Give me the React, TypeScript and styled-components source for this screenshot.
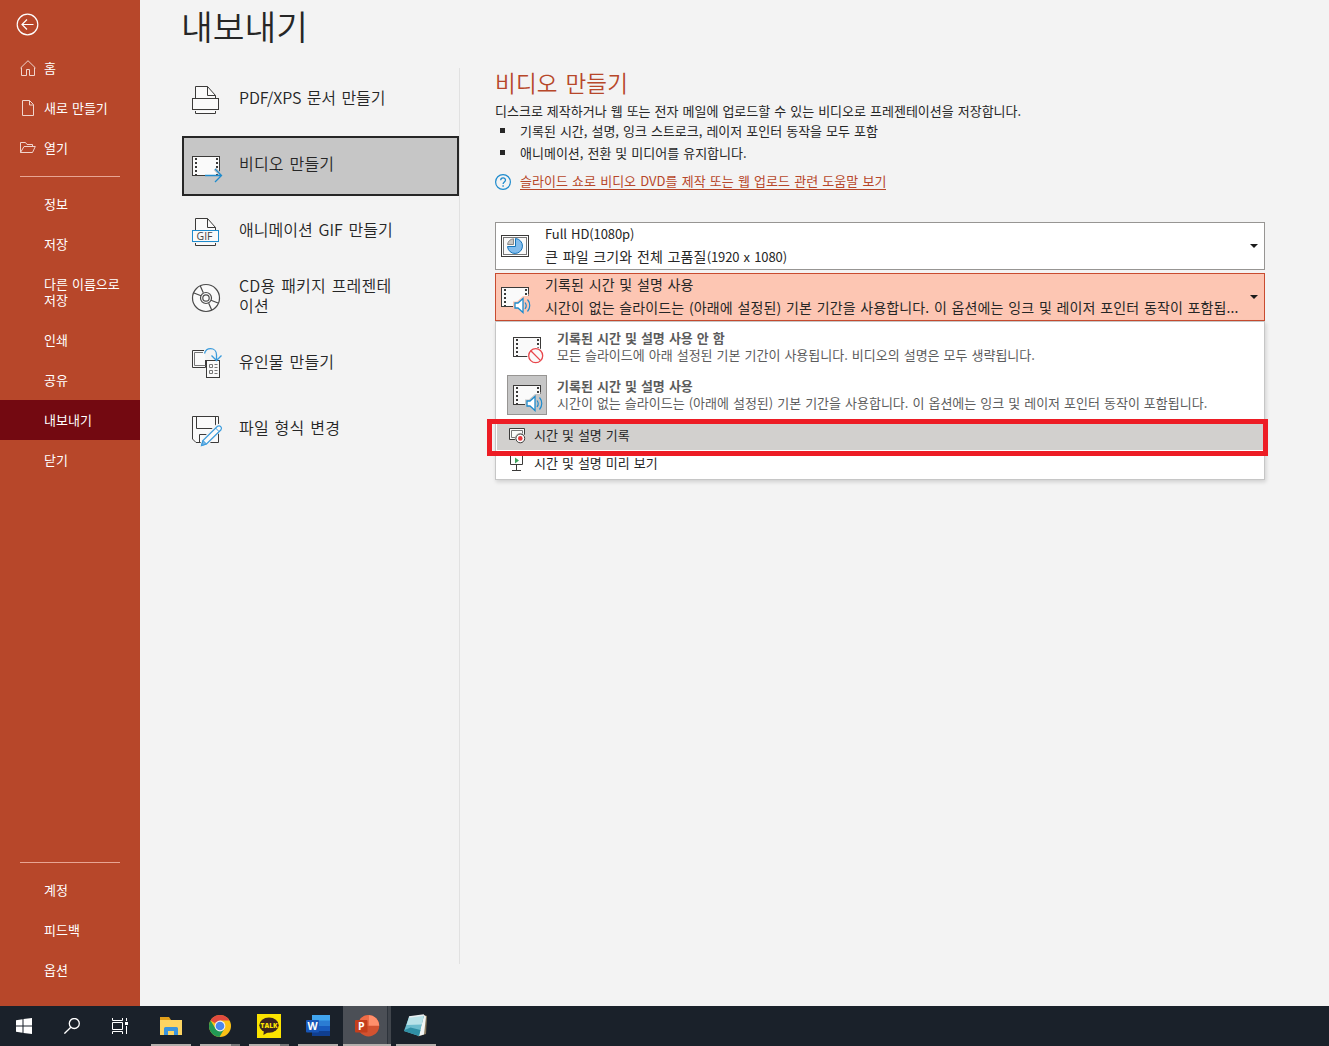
import { FC, ReactNode } from 'react'
import styled, { createGlobalStyle, css } from 'styled-components'

const ink = '#262626'
const line = '#3b3a39'
const blue = '#1e8bcd'
const paper = '#fafafa'

/* ---------- icons ---------- */

const Film = () => (
  <>
    <rect x="2.5" y="6.5" width="27" height="19" fill={paper} stroke={line} />
    <path d="M6 8v17M27 8v17" stroke={line} strokeWidth="2" strokeDasharray="2 2" />
  </>
)

const Page = () => (
  <>
    <path d="M5.5 14V2.5H17.5L25.5 11.5V14" fill={paper} stroke={line} />
    <path d="M17.5 2.5V11.5H25.5" fill="none" stroke={line} />
    <path d="M5.5 27V29.5H25.5V27" fill={paper} stroke={line} />
  </>
)

const PdfIcon = () => (
  <Svg32>
    <Page />
    <rect x="2.5" y="14.5" width="26" height="11" fill={paper} stroke={line} />
  </Svg32>
)

const VideoIcon = () => (
  <Svg32>
    <Film />
    <path d="M25 19l6.5 6.5L25 32" fill="none" stroke="#c6c6c6" strokeWidth="3.4" />
    <path d="M15 25.5H31M25 19l6.5 6.5L25 32" fill="none" stroke={blue} strokeWidth="1.3" />
  </Svg32>
)

const GifIcon = () => (
  <Svg32>
    <Page />
    <rect x="2.5" y="14.5" width="26" height="11" fill={paper} stroke={blue} />
    <IconText x="6.5" y="24">
      GIF
    </IconText>
  </Svg32>
)

const CdIcon = () => (
  <Svg32>
    <g fill={paper} stroke="#4a4a4a" strokeWidth="1.2">
      <circle cx="16" cy="16" r="13.5" />
      <circle cx="16" cy="16" r="5.5" />
      <circle cx="16" cy="16" r="3.2" />
      <path d="M10.3 4l3 6.8M4 11l7 2.8M21.7 28l-3-6.8M28 21l-7-2.8" />
    </g>
  </Svg32>
)

const HandoutIcon = () => (
  <Svg32>
    <path d="M14 2.5H2.5V19.5H15.5V12" fill={paper} stroke={line} />
    <path d="M13 4.5H4.5V17.5H15.5" fill="none" stroke="#777" />
    <rect x="16.5" y="12.5" width="13" height="17" fill={paper} stroke={line} />
    <path d="M19.5 16.5h3v3h-3zM19.5 22.5h3v3h-3z" fill="none" stroke="#777" />
    <path d="M24.5 16.5h3M24.5 19.5h3M24.5 22.5h3M24.5 25.5h3" stroke="#777" />
    <path
      d="M14.5 5.5C15.5 2 18 .7 20.5 .7c3.5 0 6 2.5 6 6V12M21.5 7.5l5 5 5-5"
      fill="none"
      stroke="#3a9bdc"
      strokeWidth="1.3"
    />
  </Svg32>
)

const SaveAsIcon = () => (
  <Svg32>
    <path d="M2.5 2.5H28.5V28.5H6L2.5 25z" fill={paper} stroke={line} />
    <path d="M6.5 2.5V14.5H25.5V2.5M9.5 28V20.5H22" fill="none" stroke={line} />
    <path d="M9 33L12 25 26 10.5 32 9 33 15 19 30z" fill="#f3f3f3" />
    <path
      d="M11.5 31.5l1.5-5L27.5 12.3c2.5-1.5 5 1 3.5 3.5L16.5 30z"
      fill={paper}
      stroke="#3a9bdc"
      strokeWidth="1.2"
    />
    <path d="M11.5 31.5l1.5-5 3.5 3.5z" fill="#75b5e5" stroke="#3a9bdc" />
    <path d="M25.5 14l3.5 3.5" stroke="#3a9bdc" />
  </Svg32>
)

const ResolutionIcon = () => (
  <Svg32>
    <rect x="2.5" y="5.5" width="27" height="21" fill="#fff" stroke={line} />
    <rect x="4.5" y="7.5" width="23" height="17" fill={paper} stroke="#777" />
    <path d="M16.5 8.5a7.5 7.5 0 1 1-8 8H16.5z" fill="#83bcec" stroke="#1473b8" />
    <path d="M14.5 8.8V14.500H8.5a7 7 0 0 1 6-5.7z" fill="#c8c6c4" stroke="#888" />
  </Svg32>
)

const NarrationIcon: FC<{ bg: string }> = ({ bg }) => (
  <Svg32>
    <Film />
    <path d="M14 20.5h4L24 15h5.500v-2H33V34H22l-4-5h-4z" fill={bg} />
    <path d="M16 22h3l5-4.5v14L19 27h-3z" fill="#fff" stroke={blue} strokeWidth="1.3" />
    <path
      d="M26 21.5c1.500 2 1.500 4.500 0 6.500M28.500 18.500c3 3.500 3 8.500 0 12"
      fill="none"
      stroke={blue}
      strokeWidth="1.200"
    />
  </Svg32>
)

const NoNarrationIcon = () => (
  <Svg32>
    <Film />
    <circle cx="24.7" cy="24.7" r="8.500" fill="#fff" />
    <circle cx="24.7" cy="24.7" r="7" fill={paper} stroke="#e8474c" strokeWidth="1.3" />
    <path d="M19.8 19.8l9.8 9.8" stroke="#e8474c" strokeWidth="1.3" />
  </Svg32>
)

const RecordIcon = () => (
  <Svg18>
    <path d="M7 12.5H1.5V1.5H16.5V8" fill={paper} stroke={line} />
    <path d="M7 10.5H3.5V3.5H14.5V7" fill="none" stroke="#777" />
    <circle cx="12.3" cy="11.4" r="5.6" fill="#d2d0ce" />
    <circle cx="12.3" cy="11.4" r="4.4" fill="#fff" stroke={line} />
    <circle cx="12.3" cy="11.4" r="2.3" fill="#e8383d" />
  </Svg18>
)

const PreviewIcon = () => (
  <Svg18>
    <path d="M2.5 0V9.5H14.5V0" fill="#fff" stroke={line} />
    <path d="M8.5 9.5V15M4 15.5H13" stroke={line} />
    <path d="M7 2.5L11 5.5 7 8.500z" fill="#3da35d" />
  </Svg18>
)

const HelpIcon = () => (
  <svg width="16" height="16" viewBox="0 0 16 16" fill="none" stroke={blue}>
    <circle cx="8" cy="8" r="7.4" strokeWidth="1.2" />
    <path d="M5.7 6.2C5.700 3.200 10.500 3.200 10.500 6c0 1.900-2.400 1.900-2.400 4" strokeWidth="1.3" />
    <path d="M8.1 11.2v1.5" strokeWidth="1.4" />
  </svg>
)

const BackIcon = () => (
  <svg width="23" height="23" viewBox="0 0 23 23" fill="none" stroke="#fff" strokeWidth="1.2">
    <circle cx="11.5" cy="11.5" r="10.3" />
    <path d="M17.500 11.500H6M11 6.500l-5 5 5 5" />
  </svg>
)

const HomeIcon = () => (
  <svg width="16" height="16" viewBox="0 0 16 16" fill="none" stroke="#f0d5cd">
    <path d="M.5 8L8 .7 15.5 8M1.5 7.5V15.5H6.5V9.5H9.5V15.5H14.5V7.5" />
  </svg>
)

const NewIcon = () => (
  <svg width="16" height="16" viewBox="0 0 16 16" fill="none" stroke="#f0d5cd">
    <path d="M2.5 .5H9.5L13.5 4.500V15.5H2.5zM9.5 .5V5H13.5" />
  </svg>
)

const OpenIcon = () => (
  <svg width="16" height="16" viewBox="0 0 16 16" fill="none" stroke="#f0d5cd">
    <path d="M.5 12.5V2.5H5.5L7 4.500H12.5V6.500M.5 12.5L4 6.500H15.3L12.5 12.5z" />
  </svg>
)

const StartIcon = () => (
  <svg width="16" height="16" viewBox="0 0 16 16" fill="#fff">
    <path d="M0 2.2L6.5 1.3V7.5H0zM7.5 1.1L16 0V7.5H7.5zM0 8.5H6.5V14.7L0 13.8zM7.5 8.5H16V16L7.5 14.900z" />
  </svg>
)

const SearchIcon = () => (
  <svg width="16" height="16" viewBox="0 0 16 16" fill="none" stroke="#fff" strokeWidth="1.3">
    <circle cx="10.3" cy="5.500" r="5" />
    <path d="M6.8 9.2L.4 15.6" />
  </svg>
)

const TaskViewIcon = () => (
  <svg width="16" height="16" viewBox="0 0 16 16" fill="none" stroke="#fff">
    <path d="M.5 0V2.5H10.5V0M.5 16V13.5H10.5V16M.5 4.500H10.5V11.500H.5zM14.5 0V3M14.5 8V16" />
    <rect x="13" y="4" width="3" height="3" fill="#fff" stroke="none" />
  </svg>
)

const ExplorerIcon = () => (
  <Svg24>
    <path d="M1 3h9l2 3h10v15H1z" fill="#e2a01b" />
    <path d="M1 6h22v15H1z" fill="#fcd462" />
    <path d="M5 21v-6.5q0-1.5 1.5-1.5h11q1.5 0 1.5 1.5V21h-4v-4H9v4z" fill="#3993dd" />
  </Svg24>
)

const ChromeIcon = () => (
  <Svg24>
    <circle cx="12" cy="12" r="11" fill="#fbc116" />
    <path d="M12 12L2.47 6.5A11 11 0 0 1 21.53 6.5H12z" fill="#e04a3f" />
    <path d="M2.47 6.5A11 11 0 0 0 11.5 23L16.5 14.600 12 12 7.5 14.600z" fill="#229a55" />
    <circle cx="12" cy="12" r="5.4" fill="#f1f1f1" />
    <circle cx="12" cy="12" r="4.3" fill="#4a86ee" />
  </Svg24>
)

const TalkIcon = () => (
  <Svg24>
    <rect width="24" height="24" fill="#fbe300" />
    <ellipse cx="12" cy="11.2" rx="9.7" ry="7.600" fill="#3a2420" />
    <path d="M7 16l-.6 5 5-3z" fill="#3a2420" />
    <TalkText x="12" y="13.6">
      TALK
    </TalkText>
  </Svg24>
)

const WordIcon = () => (
  <Svg24>
    <path d="M6 1h18v6H6z" fill="#41a5ee" />
    <path d="M6 6.5h18V12H6z" fill="#2b7cd3" />
    <path d="M6 12h18v5.5H6z" fill="#185abd" />
    <path d="M6 17h18v5H6z" fill="#103f91" />
    <rect x="0" y="6" width="13" height="12.5" rx="1" fill="#1856b8" />
    <TileText x="6.5" y="16.2">
      W
    </TileText>
  </Svg24>
)

const PowerPointIcon = () => (
  <Svg24>
    <circle cx="13.5" cy="11.7" r="10.7" fill="#d35230" />
    <path d="M13.5 1a10.7 10.7 0 0 1 10.7 10.7H13.5z" fill="#ff8f6b" />
    <path d="M13.5 1A10.7 10.7 0 0 0 2.8 11.7H13.5z" fill="#ed6c47" />
    <rect x="0" y="6" width="12.5" height="12.5" rx="1" fill="#c43e1c" />
    <TileText x="6.3" y="16.2">
      P
    </TileText>
  </Svg24>
)

const NotepadIcon = () => (
  <Svg24>
    <path d="M20 1l3 1-1 18-8 2.500z" fill="#8a7a5d" />
    <path d="M20 1l2 1.500L20 20.500 14.500 22z" fill="#f2f5f4" />
    <path d="M5 3L20 1 15 22 0 17z" fill="#6cbccd" />
    <path d="M5 3L20 1 17.800 10.500 2.500 11z" fill="#b9e2e8" />
    <path d="M.5 16l6-2.500 10 2.500L15 22 0 17z" fill="#2f8fa5" />
    <path d="M5 3L20 1" stroke="#e9eef0" strokeWidth="1.500" />
  </Svg24>
)

/* ---------- data ---------- */

type NavEntry = { label: string; icon?: ReactNode; active?: boolean; tall?: boolean }

const topNav: NavEntry[] = [
  { label: '홈', icon: <HomeIcon /> },
  { label: '새로 만들기', icon: <NewIcon /> },
  { label: '열기', icon: <OpenIcon /> },
]

const fileNav: NavEntry[] = [
  { label: '정보' },
  { label: '저장' },
  { label: '다른 이름으로 저장', tall: true },
  { label: '인쇄' },
  { label: '공유' },
  { label: '내보내기', active: true },
  { label: '닫기' },
]

const bottomNav: NavEntry[] = [{ label: '계정' }, { label: '피드백' }, { label: '옵션' }]

const exportOptions = [
  { label: 'PDF/XPS 문서 만들기', icon: <PdfIcon />, tracking: -0.1 },
  { label: '비디오 만들기', icon: <VideoIcon />, selected: true },
  { label: '애니메이션 GIF 만들기', icon: <GifIcon />, tracking: 0.05 },
  { label: 'CD용 패키지 프레젠테이션', icon: <CdIcon /> },
  { label: '유인물 만들기', icon: <HandoutIcon /> },
  { label: '파일 형식 변경', icon: <SaveAsIcon /> },
]

const taskbarApps = [
  { name: 'explorer', icon: <ExplorerIcon /> },
  { name: 'chrome', icon: <ChromeIcon />, stacked: true },
  { name: 'talk', icon: <TalkIcon />, stacked: true },
  { name: 'word', icon: <WordIcon /> },
  { name: 'powerpoint', icon: <PowerPointIcon />, active: true },
  { name: 'notepad', icon: <NotepadIcon /> },
]

const NavList: FC<{ entries: NavEntry[] }> = ({ entries }) => (
  <>
    {entries.map(({ label, icon, active, tall }) => (
      <NavItem key={label} $active={active} $tall={tall}>
        <NavIcon>{icon}</NavIcon>
        <NavLabel>{label}</NavLabel>
      </NavItem>
    ))}
  </>
)

export default function App() {
  return (
    <>
      <GlobalStyle />
      <Screen>
        <Backstage>
          <Sidebar>
            <BackButton>
              <BackIcon />
            </BackButton>
            <NavList entries={topNav} />
            <NavDivider />
            <NavList entries={fileNav} />
            <NavSpacer />
            <NavDivider />
            <NavList entries={bottomNav} />
          </Sidebar>

          <Content>
            <PageTitle>내보내기</PageTitle>
            <Columns>
              <ExportList>
                {exportOptions.map(({ label, icon, selected, tracking }) => (
                  <ExportItem key={label} $selected={selected}>
                    {icon}
                    <ExportLabel $tracking={tracking}>{label}</ExportLabel>
                  </ExportItem>
                ))}
              </ExportList>

              <Details>
                <Heading>비디오 만들기</Heading>
                <Description>
                  디스크로 제작하거나 웹 또는 전자 메일에 업로드할 수 있는 비디오로 프레젠테이션을 저장합니다.
                </Description>
                <Bullet>기록된 시간, 설명, 잉크 스트로크, 레이저 포인터 동작을 모두 포함</Bullet>
                <Bullet>애니메이션, 전환 및 미디어를 유지합니다.</Bullet>
                <HelpRow>
                  <HelpIcon />
                  <HelpLink>슬라이드 쇼로 비디오 DVD를 제작 또는 웹 업로드 관련 도움말 보기</HelpLink>
                </HelpRow>

                <Dropdown>
                  <ResolutionIcon />
                  <DropdownText>
                    <DropdownLine>
                      <Latin>Full HD(1080p)</Latin>
                    </DropdownLine>
                    <DropdownLine>
                      큰 파일 크기와 전체 고품질<Latin>(1920 x 1080)</Latin>
                    </DropdownLine>
                  </DropdownText>
                  <Caret />
                </Dropdown>
                <Dropdown $open>
                  <NarrationIcon bg="#fdc6b3" />
                  <DropdownText>
                    <DropdownLine>기록된 시간 및 설명 사용</DropdownLine>
                    <DropdownLine>
                      시간이 없는 슬라이드는 (아래에 설정된) 기본 기간을 사용합니다. 이 옵션에는 잉크 및 레이저 포인터 동작이 포함됩...
                    </DropdownLine>
                  </DropdownText>
                  <Caret />
                </Dropdown>

                <Menu>
                  <MenuOption>
                    <OptionIcon>
                      <NoNarrationIcon />
                    </OptionIcon>
                    <OptionText>
                      <strong>기록된 시간 및 설명 사용 안 함</strong>
                      <span>모든 슬라이드에 아래 설정된 기본 기간이 사용됩니다. 비디오의 설명은 모두 생략됩니다.</span>
                    </OptionText>
                  </MenuOption>
                  <MenuOption>
                    <OptionIcon $selected>
                      <NarrationIcon bg="#c6c6c6" />
                    </OptionIcon>
                    <OptionText>
                      <strong>기록된 시간 및 설명 사용</strong>
                      <span>
                        시간이 없는 슬라이드는 (아래에 설정된) 기본 기간을 사용합니다. 이 옵션에는 잉크 및 레이저 포인터 동작이 포함됩니다.
                      </span>
                    </OptionText>
                  </MenuOption>
                  <MenuCommand $hovered>
                    <RecordIcon />
                    <CommandLabel>시간 및 설명 기록</CommandLabel>
                  </MenuCommand>
                  <MenuCommand>
                    <PreviewIcon />
                    <CommandLabel>시간 및 설명 미리 보기</CommandLabel>
                  </MenuCommand>
                  <Highlight />
                </Menu>
              </Details>
            </Columns>
          </Content>
        </Backstage>

        <Taskbar>
          <SystemButton>
            <StartIcon />
          </SystemButton>
          <SystemButton>
            <SearchIcon />
          </SystemButton>
          <SystemButton>
            <TaskViewIcon />
          </SystemButton>
          <AppStrip>
            {taskbarApps.map(({ name, icon, active, stacked }) => (
              <AppButton key={name} $active={active} $stacked={stacked}>
                {icon}
              </AppButton>
            ))}
          </AppStrip>
        </Taskbar>
      </Screen>
    </>
  )
}

/* ---------- styles ---------- */

const GlobalStyle = createGlobalStyle`
  * {
    box-sizing: border-box;
  }

  body {
    margin: 0;
    overflow: hidden;
    background: #f3f3f3;
    color: ${ink};
    font-family: 'Noto Sans CJK KR', 'Open Sans', sans-serif;
    font-size: 13px;
    word-spacing: 1.1px;
  }

  svg {
    display: block;
    flex: none;
  }
`

const Svg32 = styled.svg.attrs({ viewBox: '0 0 32 32' })`
  width: 32px;
  height: 32px;
  overflow: visible;
`

const Svg24 = styled.svg.attrs({ viewBox: '0 0 24 24' })`
  width: 24px;
  height: 24px;
  overflow: visible;
`

const Svg18 = styled.svg.attrs({ viewBox: '0 0 18 18' })`
  width: 18px;
  height: 18px;
`

const IconText = styled.text`
  font-family: 'Open Sans', sans-serif;
  font-size: 10.5px;
  fill: #444;
`

const TalkText = styled.text`
  font-family: 'Open Sans', sans-serif;
  font-size: 6.5px;
  font-weight: 800;
  text-anchor: middle;
  fill: #fbe300;
`

const TileText = styled.text`
  font-family: 'Open Sans', sans-serif;
  font-size: 10.5px;
  font-weight: 700;
  text-anchor: middle;
  fill: #fff;
`

const Screen = styled.div`
  display: flex;
  flex-direction: column;
  width: 1329px;
  height: 1046px;
`

const Backstage = styled.div`
  display: flex;
  height: 1006px;
`

const Sidebar = styled.nav`
  display: flex;
  flex-direction: column;
  flex: none;
  width: 140px;
  padding-bottom: 16px;
  background: #b7472a;
  color: #fff;
`

const BackButton = styled.div`
  height: 48px;
  padding: 13px 0 0 16px;
`

const NavItem = styled.div<{ $active?: boolean; $tall?: boolean }>`
  display: flex;
  align-items: center;
  gap: 8px;
  flex: none;
  height: ${({ $tall }) => ($tall ? 56 : 40)}px;
  padding: 0 18px 0 20px;
  background: ${({ $active }) => ($active ? '#730911' : 'transparent')};
`

const NavIcon = styled.span`
  flex: none;
  width: 16px;
`

const NavLabel = styled.span`
  line-height: 16px;
  word-break: keep-all;
`

const NavDivider = styled.hr`
  flex: none;
  width: 100px;
  height: 1px;
  margin: 8px 20px 7px;
  border: 0;
  background: #e8a593;
`

const NavSpacer = styled.div`
  flex: 1;
`

const Content = styled.main`
  flex: 1;
  padding-left: 42px;
`

const PageTitle = styled.h1`
  height: 68px;
  margin: 0 0 0 -1px;
  font-size: 34.5px;
  font-weight: 350;
  line-height: 50px;
`

const Columns = styled.div`
  display: flex;
`

const ExportList = styled.div`
  display: flex;
  flex-direction: column;
  gap: 6px;
  width: 278px;
  height: 896px;
  padding-top: 2px;
  border-right: 1px solid #e1e1e1;
`

const ExportItem = styled.div<{ $selected?: boolean }>`
  display: flex;
  align-items: center;
  gap: 17px;
  flex: none;
  height: 60px;
  padding: 0 60px 0 6px;
  border: 2px solid ${({ $selected }) => ($selected ? ink : 'transparent')};
  background: ${({ $selected }) => ($selected ? '#c6c6c6' : 'transparent')};
`

const ExportLabel = styled.span<{ $tracking?: number }>`
  padding-bottom: 6px;
  font-size: 16px;
  font-weight: 350;
  line-height: 20px;
  letter-spacing: ${({ $tracking = 0.2 }) => $tracking}px;
  word-spacing: 2px;
`

const Details = styled.section`
  width: 770px;
  margin-left: 35px;
`

const Heading = styled.h2`
  height: 32px;
  margin: 0;
  color: #b7472a;
  font-size: 22.5px;
  font-weight: 350;
  line-height: 29px;
  letter-spacing: 0.2px;
  word-spacing: 2.5px;
`

const Description = styled.p`
  margin: 0;
  line-height: 22px;
  white-space: nowrap;
`

const Bullet = styled.div`
  display: flex;
  align-items: center;
  gap: 15px;
  height: 22px;
  padding-left: 5px;
  white-space: nowrap;

  ${Description} + & {
    margin-top: -3px;
  }

  &::before {
    content: '';
    width: 5px;
    height: 5px;
    background: ${ink};
  }
`

const HelpRow = styled.div`
  display: flex;
  align-items: center;
  gap: 9px;
  height: 16px;
  margin: 11px 0 32px;
`

const HelpLink = styled.a`
  padding-bottom: 1px;
  border-bottom: 1px solid #b7472a;
  color: #b7472a;
  line-height: 14px;
  white-space: nowrap;
  word-spacing: 1.3px;
`

const Dropdown = styled.div<{ $open?: boolean }>`
  display: flex;
  align-items: center;
  height: 48px;
  padding: 0 6px 0 3px;
  border: 1px solid #979593;
  background: #fff;

  ${({ $open }) =>
    $open &&
    css`
      margin-top: 3px;
      border-color: #c84b2f;
      background: #fdc6b3;
    `}
`

const DropdownText = styled.div`
  flex: 1;
  margin-left: 14px;
  padding-bottom: 2px;
  font-size: 14px;
  letter-spacing: 0.12px;
  word-spacing: 1.4px;
`

const DropdownLine = styled.div`
  height: 23px;
  line-height: 23px;
  white-space: nowrap;
`

const Latin = styled.span`
  font-size: 13px;
  letter-spacing: -0.1px;
`

const Caret = styled.span`
  flex: none;
  border: 4px solid transparent;
  border-top-color: #1b1b1b;
  border-bottom: 0;
`

const Menu = styled.div`
  position: relative;
  height: 159px;
  padding: 1px 1px 0;
  border: 1px solid #c6c6c6;
  background: #fff;
  box-shadow: 1px 2px 4px rgba(0, 0, 0, 0.15);
`

const MenuOption = styled.div`
  display: flex;
  align-items: center;
  gap: 10px;
  height: 48px;
  padding-left: 10px;
`

const OptionIcon = styled.div<{ $selected?: boolean }>`
  display: grid;
  place-items: center;
  flex: none;
  width: 40px;
  height: 40px;
  border: 1px solid ${({ $selected }) => ($selected ? '#979593' : 'transparent')};
  background: ${({ $selected }) => ($selected ? '#c6c6c6' : 'transparent')};
`

const OptionText = styled.div`
  display: flex;
  flex-direction: column;
  padding-bottom: 2px;
  color: #5c5c5c;
  line-height: 17px;
  white-space: nowrap;
`

const MenuCommand = styled.div<{ $hovered?: boolean }>`
  display: flex;
  align-items: center;
  gap: 8px;
  height: 28px;
  padding-left: 11px;
  margin-top: ${({ $hovered }) => ($hovered ? 3 : 0)}px;
  background: ${({ $hovered }) => ($hovered ? '#d2d0ce' : 'transparent')};
`

const CommandLabel = styled.span`
  padding-bottom: 4px;
  white-space: nowrap;
`

const Highlight = styled.div`
  position: absolute;
  top: 97px;
  left: -9px;
  width: 781px;
  height: 37px;
  border: 5px solid #ed1c24;
`

const Taskbar = styled.footer`
  display: flex;
  height: 40px;
  background: #1a212a;
`

const SystemButton = styled.div`
  display: grid;
  place-items: center;
  width: 48px;
`

const AppStrip = styled.div`
  display: flex;
  gap: 1px;
  margin-left: 3px;
`

const AppButton = styled.div<{ $active?: boolean; $stacked?: boolean }>`
  display: grid;
  place-items: center;
  width: 48px;
  border: solid transparent;
  border-width: 0 4px;
  background: linear-gradient(#b3afac, #b3afac) bottom / 100% 2px no-repeat padding-box;

  ${({ $stacked }) =>
    $stacked &&
    css`
      background: linear-gradient(90deg, #b3afac 31px, #77787a 31px) bottom / 100% 2px no-repeat padding-box;
    `}

  ${({ $active }) =>
    $active &&
    css`
      border-width: 0;
      background:
        linear-gradient(#b3afac, #b3afac) bottom / 100% 2px no-repeat,
        linear-gradient(90deg, #4b4f56 44px, #2d333b 44px, #2d333b 45px, #40454c 45px);
    `}
`
